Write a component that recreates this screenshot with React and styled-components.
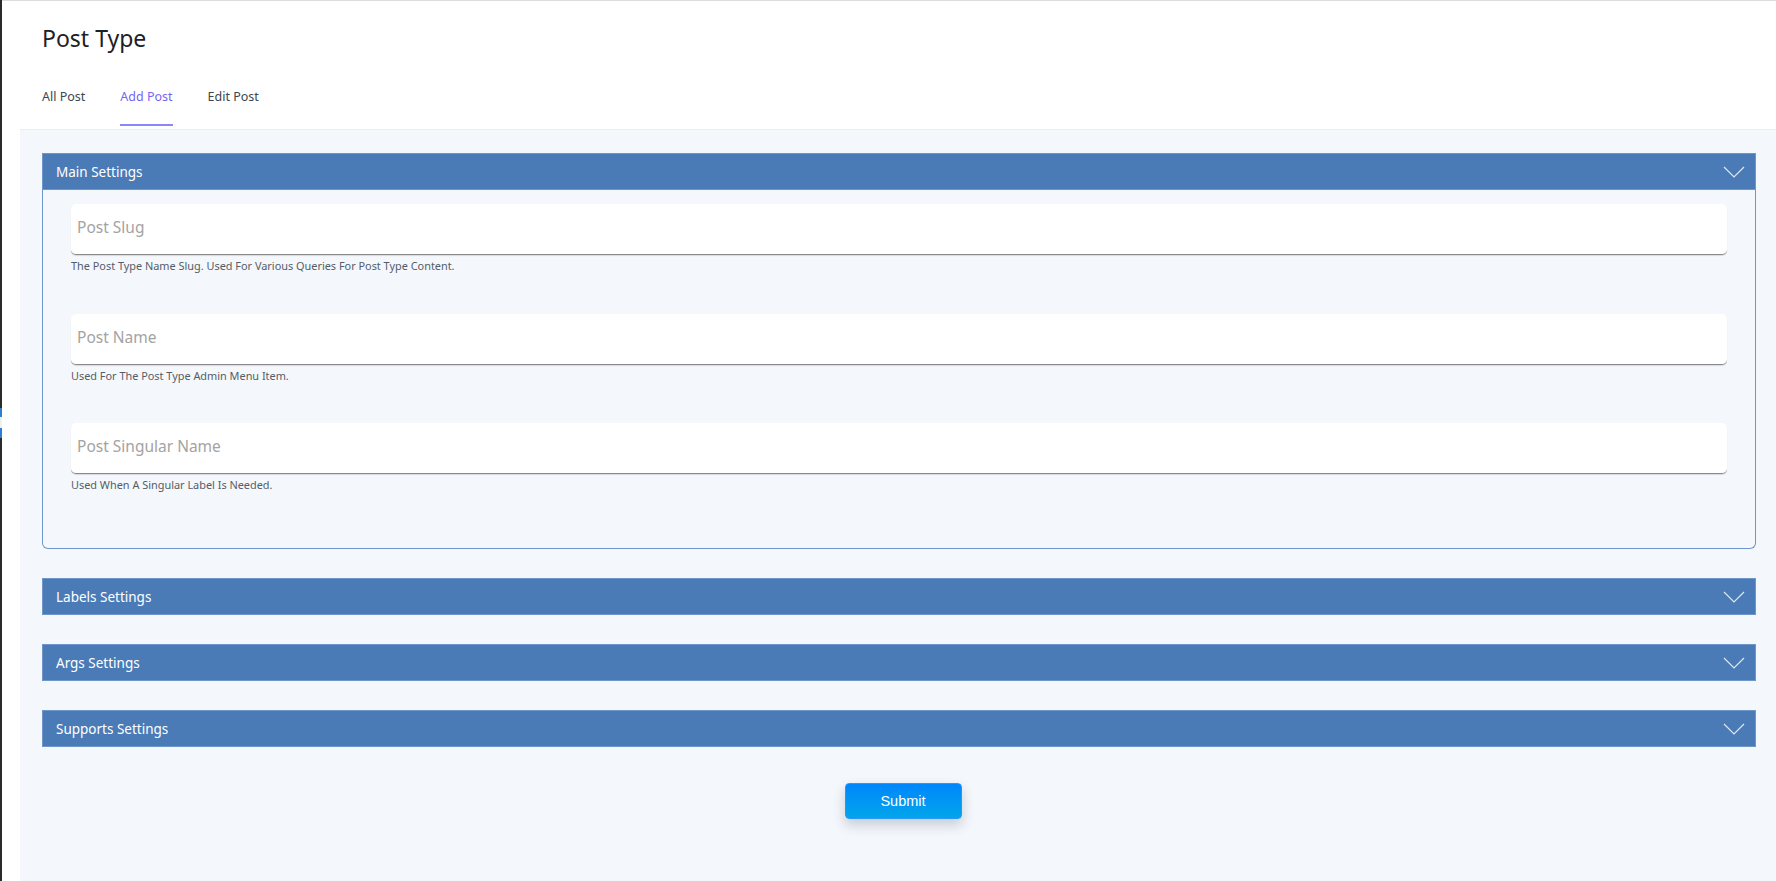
import React, { useState } from "react";
import styled, { createGlobalStyle } from "styled-components";

const GlobalStyle = createGlobalStyle`
  html, body {
    margin: 0;
    padding: 0;
    background: #ffffff;
  }
  body {
    font-family: "Noto Sans", "Open Sans", sans-serif;
  }
  * {
    box-sizing: border-box;
  }
`;

const sections = ["Main Settings", "Labels Settings", "Args Settings", "Supports Settings"];

const fields = [
  { name: "slug", placeholder: "Post Slug", help: "The Post Type Name Slug. Used For Various Queries For Post Type Content." },
  { name: "name", placeholder: "Post Name", help: "Used For The Post Type Admin Menu Item." },
  { name: "singular", placeholder: "Post Singular Name", help: "Used When A Singular Label Is Needed." },
];

function Chevron() {
  return (
    <svg width="22" height="12" viewBox="0 0 22 12" fill="none">
      <path d="M1 1 L11 11 L21 1" stroke="#dfe8f4" strokeWidth="1.2" />
    </svg>
  );
}

function App() {
  const [tab, setTab] = useState("Add Post");
  const [open, setOpen] = useState("Main Settings");

  return (
    <>
      <GlobalStyle />
      <Screen>
        <EdgeBar />
        <Page>
          <Header>
            <Title>Post Type</Title>
            <Tabs>
              {["All Post", "Add Post", "Edit Post"].map((t) => (
                <Tab key={t} $active={tab === t} onClick={() => setTab(t)}>
                  {t}
                </Tab>
              ))}
            </Tabs>
          </Header>
          <Content>
            <Accordion>
              {sections.map((s) => (
                <Section key={s}>
                  <SectionHead onClick={() => setOpen(open === s ? "" : s)}>
                    <span>{s}</span>
                    <Chevron />
                  </SectionHead>
                  {open === s && s === "Main Settings" && (
                    <SectionBody>
                      {fields.map((f) => (
                        <Field key={f.name}>
                          <Input placeholder={f.placeholder} />
                          <Help>{f.help}</Help>
                        </Field>
                      ))}
                    </SectionBody>
                  )}
                </Section>
              ))}
            </Accordion>
            <Actions>
              <SubmitButton type="button">Submit</SubmitButton>
            </Actions>
          </Content>
        </Page>
      </Screen>
    </>
  );
}

export default App;

const Screen = styled.div`
  display: flex;
  min-height: 881px;
`;

const EdgeBar = styled.div`
  width: 2px;
  flex-shrink: 0;
  background: linear-gradient(
    to bottom,
    #2a2a2a 0,
    #2a2a2a 408px,
    #2f7fd0 408px,
    #2f7fd0 417px,
    #f0f0f0 417px,
    #f0f0f0 428px,
    #2f7fd0 428px,
    #2f7fd0 438px,
    #2a2a2a 438px
  );
`;

const Page = styled.div`
  flex: 1;
  display: flex;
  flex-direction: column;
  background: #ffffff;
  border-top: 1px solid #dcdcdc;
`;

const Header = styled.header`
  height: 128px;
  padding: 21px 0 0 40px;
  background: #ffffff;
`;

const Title = styled.h1`
  margin: 0;
  font-size: 23px;
  font-weight: 400;
  line-height: 32px;
  color: #1d2127;
`;

const Tabs = styled.nav`
  display: flex;
  gap: 35px;
  margin-top: 34px;
`;

const Tab = styled.div`
  font-size: 12.5px;
  line-height: 18px;
  padding-bottom: 18px;
  color: ${(p) => (p.$active ? "#7466f2" : "#3b4653")};
  border-bottom: 2px solid ${(p) => (p.$active ? "#8a86fb" : "transparent")};
  cursor: pointer;
`;

const Content = styled.main`
  flex: 1;
  margin-left: 18px;
  padding: 23px 20px 40px 22px;
  background: #f4f7fb;
  border-top: 1px solid #e9edf2;
`;

const Accordion = styled.div`
  display: flex;
  flex-direction: column;
  gap: 29px;
`;

const Section = styled.section`
  display: flex;
  flex-direction: column;
`;

const SectionHead = styled.div`
  height: 37px;
  display: flex;
  align-items: center;
  justify-content: space-between;
  padding: 0 10px 0 13px;
  background: #4a7bb6;
  border: 1px solid #6f96c8;
  color: #ffffff;
  font-size: 13.5px;
  cursor: pointer;
`;

const SectionBody = styled.div`
  display: flex;
  flex-direction: column;
  gap: 40.5px;
  padding: 14px 28px 56px 28px;
  border: 1px solid #6f96c8;
  border-top: none;
  border-radius: 0 0 6px 6px;
`;

const Field = styled.div`
  display: flex;
  flex-direction: column;
`;

const Input = styled.input`
  height: 51px;
  width: 100%;
  padding: 0 6px 4px;
  border: none;
  border-bottom: 1px solid #8a8a8a;
  border-radius: 5px;
  background: #ffffff;
  box-shadow: 0 1px 1px rgba(0, 0, 0, 0.12);
  font-family: "Noto Sans", sans-serif;
  font-size: 15.5px;
  color: #333;
  outline: none;

  &::placeholder {
    color: #a3a3a3;
  }
`;

const Help = styled.div`
  margin-top: 3px;
  font-size: 10.9px;
  line-height: 15px;
  color: #555d68;
`;

const Actions = styled.div`
  display: flex;
  justify-content: center;
  padding: 36px 0 0 8px;
`;

const SubmitButton = styled.button`
  width: 117px;
  height: 36px;
  border: 1px solid #2a97f5;
  border-radius: 4px;
  background: linear-gradient(to bottom, #0086fc, #01a6ea);
  box-shadow: 0 6px 12px rgba(60, 80, 110, 0.25);
  color: #ffffff;
  font-family: "Liberation Sans", Arial, sans-serif;
  font-size: 14.5px;
  cursor: pointer;
`;
